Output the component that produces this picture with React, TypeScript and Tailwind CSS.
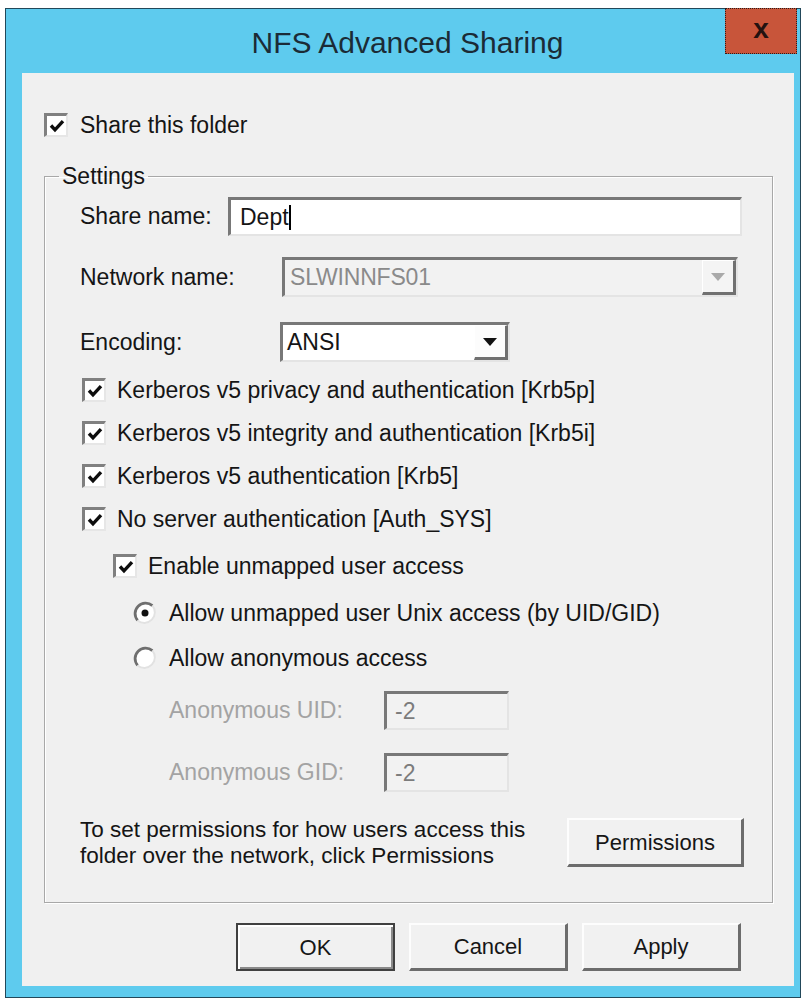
import React from "react";

const sunken =
  "border-t-[3px] border-l-[3px] border-r-[2px] border-b-[2px] border-t-[#787878] border-l-[#787878] border-r-[#e4e4e4] border-b-[#e4e4e4]";

function Check({ checked = true }: { checked?: boolean }) {
  return (
    <span className="flex h-[24px] w-[24px] shrink-0 items-center justify-center border-t-[3px] border-l-[3px] border-r-2 border-b-2 border-t-[#808080] border-l-[#808080] border-r-[#e6e6e6] border-b-[#e6e6e6] bg-white">
      {checked && (
        <svg width="18" height="18" viewBox="0 0 18 18">
          <path d="M3 8.5 L7 12.8 L15 4.2" fill="none" stroke="#0d0d0d" strokeWidth="3.4" />
        </svg>
      )}
    </span>
  );
}

function Radio({ on = false }: { on?: boolean }) {
  return (
    <svg width="24" height="24" viewBox="0 0 24 24" className="shrink-0">
      <circle cx="12" cy="12" r="10.5" fill="#fff" />
      <path d="M4.6 19.4 A10.5 10.5 0 0 1 19.4 4.6" fill="none" stroke="#6f6f6f" strokeWidth="2.8" />
      <path d="M19.4 4.6 A10.5 10.5 0 0 1 4.6 19.4" fill="none" stroke="#e2e2e2" strokeWidth="2" />
      {on && <circle cx="12" cy="12" r="3.5" fill="#111" />}
    </svg>
  );
}

function DropButton({ disabled = false }: { disabled?: boolean }) {
  return (
    <span
      className={`flex h-full w-[34px] shrink-0 items-center justify-center border-t border-l border-t-white border-l-white border-b-[3px] border-r-[3px] border-b-[#707070] border-r-[#707070] ${
        disabled ? "bg-[#f4f4f4]" : "bg-[#fcfcfc]"
      }`}
    >
      <svg width="14" height="8" viewBox="0 0 14 8">
        <path d="M0 0 H14 L7 8 Z" fill={disabled ? "#a9a9a9" : "#111"} />
      </svg>
    </span>
  );
}

function CheckRow({ label, className = "" }: { label: string; className?: string }) {
  return (
    <div className={`flex h-[26px] items-center gap-[11px] ${className}`}>
      <Check />
      <span>{label}</span>
    </div>
  );
}

function RadioRow({ label, on, className = "" }: { label: string; on?: boolean; className?: string }) {
  return (
    <div className={`flex h-[26px] items-center gap-[12px] ${className}`}>
      <Radio on={on} />
      <span>{label}</span>
    </div>
  );
}

function PushButton({ label, primary = false, className = "" }: { label: string; primary?: boolean; className?: string }) {
  const edge = primary
    ? "border-2 border-[#404040] shadow-[inset_2px_2px_0_#fff,inset_-2px_-2px_0_#8a8a8a]"
    : "border-t-2 border-l-2 border-t-[#fdfdfd] border-l-[#fdfdfd] border-b-[3px] border-r-[3px] border-b-[#6c6c6c] border-r-[#6c6c6c]";
  return (
    <button className={`flex items-center justify-center bg-[#f1f1f1] text-[22px] text-[#161616] ${edge} ${className}`}>
      {label}
    </button>
  );
}

function AnonField({ label, value, className = "" }: { label: string; value: string; className?: string }) {
  return (
    <div className={`ml-[89px] flex h-[39px] items-center ${className}`}>
      <span className="w-[215px] text-[#a3a3a3]">{label}</span>
      <div className={`flex h-full w-[125px] items-center bg-[#f2f2f2] pl-[8px] text-[#7c7c7c] ${sunken}`}>{value}</div>
    </div>
  );
}

export default function App() {
  return (
    <div className="min-h-screen bg-white pl-[5px] pt-[8px] font-['Liberation_Sans',Arial,sans-serif]">
      <div className="flex h-[990px] w-[796px] flex-col border border-[#22485a] bg-[#5ecbee] pb-[11px] pl-[16px] pr-[6px]">
        {/* caption */}
        <div className="flex h-[64px] items-start">
          <div className="w-[68px]" />
          <div className="flex-1 pt-[17px] text-center text-[30px] leading-[34px] text-[#1b2b36]">NFS Advanced Sharing</div>
          <button className="-mr-[3px] -mt-[1px] flex h-[46px] w-[72px] items-center justify-center border border-dotted border-[#2b1c1a] bg-[#c8553a] pb-[4px] text-[28px] font-bold leading-none text-[#241210]">
            x
          </button>
        </div>

        {/* client area */}
        <div className="flex flex-1 flex-col bg-[#f0f0f0] pl-[22px] pr-[21px] pt-[39px] text-[23px] text-[#151515]">
          <div className="flex h-[26px] items-center gap-[12px]">
            <Check />
            <span>Share this folder</span>
          </div>

          <fieldset className="mt-[25px] border border-[#a8a8a8] shadow-[1px_1px_0_#fff,inset_1px_1px_0_#fff]">
            <legend className="ml-[14px] px-[3px] leading-[26px]">Settings</legend>
            <div className="flex flex-col pb-[35px] pl-[35px]">
              <div className="mt-[8px] flex h-[39px] items-center">
                <span className="w-[148px]">Share name:</span>
                <div className={`flex h-full w-[514px] items-center bg-white pl-[9px] ${sunken}`}>
                  <span>Dept</span>
                  <span className="h-[25px] w-[2px] bg-black" />
                </div>
              </div>

              <div className="mt-[21px] flex h-[40px] items-center">
                <span className="w-[202px]">Network name:</span>
                <div className={`flex h-full w-[456px] items-center bg-[#f2f2f2] ${sunken}`}>
                  <span className="flex-1 pl-[5px] tracking-[-0.2px] text-[#8a8a8a]">SLWINNFS01</span>
                  <DropButton disabled />
                </div>
              </div>

              <div className="mt-[25px] flex h-[40px] items-center">
                <span className="w-[200px]">Encoding:</span>
                <div className={`flex h-full w-[230px] items-center bg-white ${sunken}`}>
                  <span className="flex-1 pl-[4px]">ANSI</span>
                  <DropButton />
                </div>
              </div>

              <div className="mt-[15px] ml-[2px] flex flex-col gap-[17px]">
                <CheckRow label="Kerberos v5 privacy and authentication [Krb5p]" />
                <CheckRow label="Kerberos v5 integrity and authentication [Krb5i]" />
                <CheckRow label="Kerberos v5 authentication [Krb5]" />
                <CheckRow label="No server authentication [Auth_SYS]" />
              </div>

              <CheckRow label="Enable unmapped user access" className="mt-[21px] ml-[33px]" />
              <RadioRow label="Allow unmapped user Unix access (by UID/GID)" on className="mt-[21px] ml-[53px]" />
              <RadioRow label="Allow anonymous access" className="mt-[19px] ml-[53px]" />

              <AnonField label="Anonymous UID:" value="-2" className="mt-[20px]" />
              <AnonField label="Anonymous GID:" value="-2" className="mt-[23px]" />

              <div className="mt-[26px] flex h-[49px] items-center">
                <p className="w-[487px] text-[22.5px] leading-[26px]">
                  To set permissions for how users access this
                  <br />
                  folder over the network, click Permissions
                </p>
                <PushButton label="Permissions" className="h-full w-[177px]" />
              </div>
            </div>
          </fieldset>

          <div className="mt-[20px] ml-[192px] flex h-[48px] gap-[14px]">
            <PushButton label="OK" primary className="w-[159px]" />
            <PushButton label="Cancel" className="w-[159px]" />
            <PushButton label="Apply" className="w-[159px]" />
          </div>
        </div>
      </div>
    </div>
  );
}
